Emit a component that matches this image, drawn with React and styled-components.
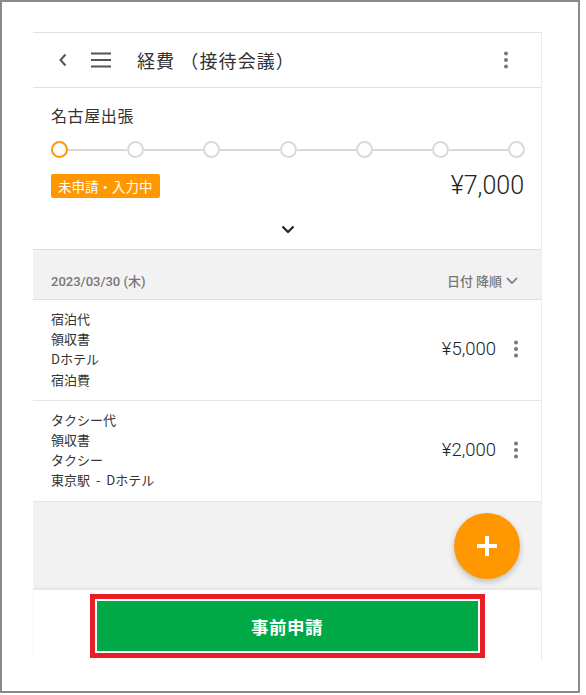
import styled, { createGlobalStyle } from "styled-components";

const GlobalStyle = createGlobalStyle`
  html, body {
    margin: 0;
    padding: 0;
    background: #fff;
  }
  body {
    font-family: Roboto, "Noto Sans CJK JP", sans-serif;
    color: #333;
  }
`;

const Frame = styled.div`
  box-sizing: border-box;
  width: 580px;
  height: 693px;
  border: 2px solid #8a8a8a;
  padding: 30px 0 0 31px;
  background: #fff;
`;

const Card = styled.div`
  width: 509px;
  height: 628px;
  box-sizing: border-box;
  border-top: 1px solid #e2e2e2;
  border-right: 1px solid #ececec;
  display: flex;
  flex-direction: column;
  background: #fff;
`;

const Header = styled.div`
  display: flex;
  align-items: center;
  height: 54px;
  flex: none;
  border-bottom: 1px solid #e2e2e2;
  padding: 0 23px 0 22px;
  color: #555;
`;

const IconButton = styled.div`
  display: flex;
  align-items: center;
  justify-content: center;
  width: ${(p) => p.$w || 24}px;
  height: 24px;
  margin-right: ${(p) => p.$mr || 0}px;
`;

const Title = styled.div`
  font-family: "Noto Sans CJK JP", sans-serif;
  font-size: 18px;
  color: #333;
  flex: 1;
  letter-spacing: 1.1px;
`;

const Summary = styled.div`
  padding: 15px 16px 0 18px;
  height: 161px;
  flex: none;
  box-sizing: border-box;
`;

const TripName = styled.div`
  font-family: "Noto Sans CJK JP", sans-serif;
  font-size: 16px;
  letter-spacing: 0.6px;
  color: #333;
  line-height: 24px;
`;

const Stepper = styled.div`
  display: flex;
  align-items: center;
  margin-top: 14px;
`;

const Dot = styled.div`
  box-sizing: border-box;
  width: 17px;
  height: 17px;
  border-radius: 50%;
  border: 2px solid ${(p) => (p.$active ? "#ff9800" : "#d9d9d9")};
  flex: none;
`;

const Line = styled.div`
  flex: 1;
  height: 2px;
  background: #d9d9d9;
`;

const StatusRow = styled.div`
  display: flex;
  align-items: center;
  justify-content: space-between;
  margin-top: 13px;
`;

const Badge = styled.div`
  font-family: "Noto Sans CJK JP", sans-serif;
  background: #ff9800;
  color: #fff;
  font-size: 13.5px;
  line-height: 24px;
  padding: 0 7px;
  border-radius: 2px;
`;

const Total = styled.div`
  font-size: 25px;
  font-weight: 300;
  color: #222;
  margin-right: 1px;
`;

const Expand = styled.div`
  display: flex;
  justify-content: center;
  margin-top: 25px;
`;

const Band = styled.div`
  flex: 1;
  display: flex;
  flex-direction: column;
  background: #f2f2f2;
  border-top: 1px solid #dedede;
`;

const DateHeader = styled.div`
  display: flex;
  align-items: flex-end;
  justify-content: space-between;
  height: 50px;
  box-sizing: border-box;
  padding: 0 22px 9px 18px;
  border-bottom: 1px solid #dedede;
  font-size: 13px;
  font-weight: 500;
  color: #777;
`;

const Sort = styled.div`
  display: flex;
  align-items: center;
  gap: 3px;
  font-family: "Noto Sans CJK JP", sans-serif;
`;

const Item = styled.div`
  display: flex;
  align-items: center;
  background: #fff;
  border-bottom: 1px solid #e6e6e6;
  padding: 9px 22px 10px 18px;
`;

const ItemText = styled.div`
  flex: 1;
  font-family: "Noto Sans CJK JP", sans-serif;
  font-size: 13px;
  line-height: 20.2px;
  color: #333;
  word-spacing: 3px;
`;

const Amount = styled.div`
  font-size: 18.5px;
  font-weight: 300;
  color: #222;
  margin-right: 17px;
`;

const FabArea = styled.div`
  flex: 1;
  display: flex;
  align-items: center;
  justify-content: flex-end;
  padding-right: 21px;
`;

const Fab = styled.div`
  width: 66px;
  height: 66px;
  border-radius: 50%;
  background: #ff9800;
  display: flex;
  align-items: center;
  justify-content: center;
  box-shadow: 0 3px 6px rgba(0, 0, 0, 0.22);
`;

const Footer = styled.div`
  height: 70px;
  flex: none;
  display: flex;
  justify-content: center;
  padding-top: 4px;
  box-sizing: border-box;
  box-shadow: 0 -2px 3px rgba(0, 0, 0, 0.06);
  background: #fff;
  position: relative;
`;

const Highlight = styled.div`
  border: 5px solid #ea1c24;
  padding: 2px;
  height: 64px;
  width: 395px;
  box-sizing: border-box;
  background: #fff;
`;

const Submit = styled.button`
  width: 100%;
  height: 100%;
  background: #00a846;
  border: none;
  color: #fff;
  font-family: "Noto Sans CJK JP", sans-serif;
  font-weight: 700;
  font-size: 17.5px;
  letter-spacing: 0.5px;
  cursor: pointer;
`;

const Kebab = ({ color = "#777" }) => (
  <svg width="6" height="18" viewBox="0 0 6 18">
    <circle cx="3" cy="2.5" r="2" fill={color} />
    <circle cx="3" cy="9" r="2" fill={color} />
    <circle cx="3" cy="15.5" r="2" fill={color} />
  </svg>
);

const items = [
  { lines: ["宿泊代", "領収書", "Dホテル", "宿泊費"], amount: "¥5,000" },
  { lines: ["タクシー代", "領収書", "タクシー", "東京駅 - Dホテル"], amount: "¥2,000" },
];

export default function App() {
  const steps = 7;
  return (
    <>
      <GlobalStyle />
      <Frame>
        <Card>
          <Header>
            <IconButton $w={16} $mr={20}>
              <svg width="10" height="14" viewBox="0 0 10 14">
                <path d="M7.5 1.5 L2.5 7 L7.5 12.5" fill="none" stroke="#555" strokeWidth="2" />
              </svg>
            </IconButton>
            <IconButton $w={20} $mr={26}>
              <svg width="20" height="16" viewBox="0 0 20 16">
                <rect x="0" y="0.5" width="20" height="2" fill="#555" />
                <rect x="0" y="7" width="20" height="2" fill="#555" />
                <rect x="0" y="13.5" width="20" height="2" fill="#555" />
              </svg>
            </IconButton>
            <Title>経費 （接待会議）</Title>
            <IconButton $w={24}>
              <Kebab />
            </IconButton>
          </Header>

          <Summary>
            <TripName>名古屋出張</TripName>
            <Stepper>
              {Array.from({ length: steps }).flatMap((_, i) =>
                i < steps - 1
                  ? [<Dot key={"d" + i} $active={i === 0} />, <Line key={"l" + i} />]
                  : [<Dot key={"d" + i} $active={i === 0} />]
              )}
            </Stepper>
            <StatusRow>
              <Badge>未申請・入力中</Badge>
              <Total>¥7,000</Total>
            </StatusRow>
            <Expand>
              <svg width="14" height="9" viewBox="0 0 14 9">
                <path d="M1.5 1.5 L7 7 L12.5 1.5" fill="none" stroke="#222" strokeWidth="2.2" />
              </svg>
            </Expand>
          </Summary>

          <Band>
            <DateHeader>
              <span>2023/03/30 (木)</span>
              <Sort>
                日付 降順
                <svg width="14" height="9" viewBox="0 0 14 9">
                  <path d="M2 2 L7 7 L12 2" fill="none" stroke="#777" strokeWidth="1.6" />
                </svg>
              </Sort>
            </DateHeader>
            {items.map((it, i) => (
              <Item key={i}>
                <ItemText>
                  {it.lines.map((l, j) => (
                    <div key={j}>{l}</div>
                  ))}
                </ItemText>
                <Amount>{it.amount}</Amount>
                <Kebab />
              </Item>
            ))}
            <FabArea>
              <Fab>
                <svg width="22" height="22" viewBox="0 0 22 22">
                  <rect x="9" y="1" width="4" height="20" fill="#fff" />
                  <rect x="1" y="9" width="20" height="4" fill="#fff" />
                </svg>
              </Fab>
            </FabArea>
          </Band>

          <Footer>
            <Highlight>
              <Submit>事前申請</Submit>
            </Highlight>
          </Footer>
        </Card>
      </Frame>
    </>
  );
}
